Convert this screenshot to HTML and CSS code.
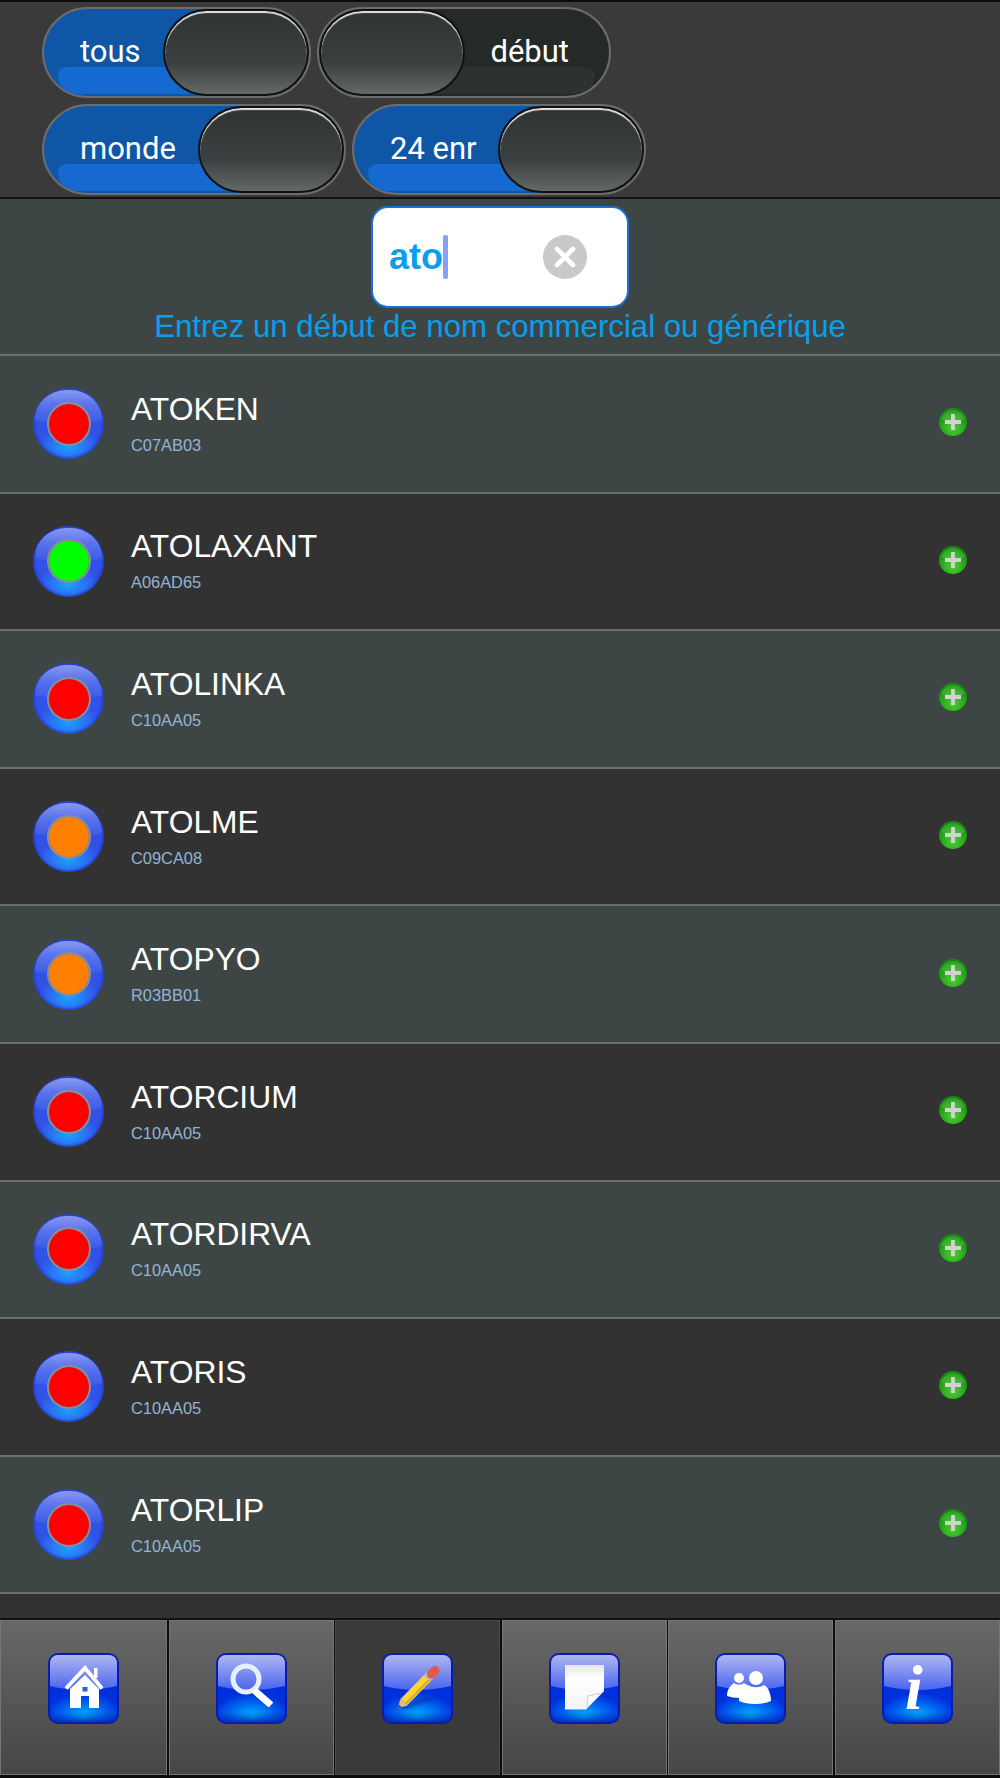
FILE: index.html
```html
<!DOCTYPE html>
<html lang="fr">
<head>
<meta charset="utf-8">
<title>Recherche</title>
<link rel="stylesheet" href="styles.css">
</head>
<body>
<svg class="defs" aria-hidden="true" width="0" height="0">
  <defs>
    <radialGradient id="tileBase" cx="50%" cy="86%" r="58%" gradientTransform="translate(0 .4) scale(1 .6)">
      <stop offset="0" stop-color="#00b8ff"/>
      <stop offset="0.55" stop-color="#0068f2"/>
      <stop offset="1" stop-color="#0030dc"/>
    </radialGradient>
    <linearGradient id="tileEdge" x1="0" y1="0" x2="0" y2="1">
      <stop offset="0.85" stop-color="#0020b0" stop-opacity="0"/>
      <stop offset="1" stop-color="#0020b0" stop-opacity=".75"/>
    </linearGradient>
    <linearGradient id="tileGloss" x1="0" y1="0" x2="0" y2="1">
      <stop offset="0" stop-color="#b0b6f2"/>
      <stop offset="1" stop-color="#4a64ee"/>
    </linearGradient>
    <linearGradient id="paper" x1="0" y1="0" x2="0" y2="1">
      <stop offset="0" stop-color="#e6e6e2"/>
      <stop offset="0.3" stop-color="#ffffff"/>
      <stop offset="1" stop-color="#f4f4f2"/>
    </linearGradient>
    <radialGradient id="plusBall" cx="50%" cy="72%" r="62%">
      <stop offset="0" stop-color="#4fd034"/>
      <stop offset="0.65" stop-color="#27a81b"/>
      <stop offset="1" stop-color="#148c12"/>
    </radialGradient>
    <filter id="soft"><feGaussianBlur stdDeviation="1.6"/></filter>
    <symbol id="tile" viewBox="0 0 71 71">
      <rect width="71" height="71" rx="10" fill="#0a1cac"/>
      <rect x="2" y="2" width="67" height="67" rx="8" fill="url(#tileBase)"/>
      <rect x="2" y="2" width="67" height="67" rx="8" fill="url(#tileEdge)"/>
      <path d="M2 10a8 8 0 0 1 8-8h51a8 8 0 0 1 8 8v23Q35.5 41 2 33z" fill="url(#tileGloss)"/>
    </symbol>
    <symbol id="plus" viewBox="0 0 28 28">
      <circle cx="14" cy="14" r="14" fill="url(#plusBall)"/>
      <path d="M2 11a12.500 12.500 0 0 1 24 0q-12 5-24 0z" fill="#8ce070" opacity=".25"/>
      <path d="M14 6v16M6 14h16" stroke="#d0d4d0" stroke-width="3.800"/>
    </symbol>
  </defs>
</svg>

<header class="filters">
  <div class="filter-row">
    <div class="toggle on w-tous"><span class="toggle-label">tous</span><span class="knob"></span></div>
    <div class="toggle off w-debut"><span class="knob"></span><span class="toggle-label">début</span></div>
  </div>
  <div class="filter-row">
    <div class="toggle on w-monde"><span class="toggle-label">monde</span><span class="knob"></span></div>
    <div class="toggle on w-enr"><span class="toggle-label">24 enr</span><span class="knob"></span></div>
  </div>
</header>

<section class="search">
  <div class="search-box">
    <span class="search-value">ato</span><span class="caret"></span>
    <svg class="clear" viewBox="0 0 44 44"><circle cx="22" cy="22" r="22" fill="#c9c9c9"/><path d="M14 14l16 16M30 14L14 30" stroke="#fff" stroke-width="4.600" stroke-linecap="round"/></svg>
  </div>
  <p class="hint">Entrez un début de nom commercial ou générique</p>
</section>

<main class="results">
  <article class="row"><span class="orb"><span class="dot red"></span></span><div class="meta"><div class="name">ATOKEN</div><div class="code">C07AB03</div></div><svg class="add"><use href="#plus"/></svg></article>
  <article class="row"><span class="orb"><span class="dot green"></span></span><div class="meta"><div class="name">ATOLAXANT</div><div class="code">A06AD65</div></div><svg class="add"><use href="#plus"/></svg></article>
  <article class="row"><span class="orb"><span class="dot red"></span></span><div class="meta"><div class="name">ATOLINKA</div><div class="code">C10AA05</div></div><svg class="add"><use href="#plus"/></svg></article>
  <article class="row"><span class="orb"><span class="dot orange"></span></span><div class="meta"><div class="name">ATOLME</div><div class="code">C09CA08</div></div><svg class="add"><use href="#plus"/></svg></article>
  <article class="row"><span class="orb"><span class="dot orange"></span></span><div class="meta"><div class="name">ATOPYO</div><div class="code">R03BB01</div></div><svg class="add"><use href="#plus"/></svg></article>
  <article class="row"><span class="orb"><span class="dot red"></span></span><div class="meta"><div class="name">ATORCIUM</div><div class="code">C10AA05</div></div><svg class="add"><use href="#plus"/></svg></article>
  <article class="row"><span class="orb"><span class="dot red"></span></span><div class="meta"><div class="name">ATORDIRVA</div><div class="code">C10AA05</div></div><svg class="add"><use href="#plus"/></svg></article>
  <article class="row"><span class="orb"><span class="dot red"></span></span><div class="meta"><div class="name">ATORIS</div><div class="code">C10AA05</div></div><svg class="add"><use href="#plus"/></svg></article>
  <article class="row"><span class="orb"><span class="dot red"></span></span><div class="meta"><div class="name">ATORLIP</div><div class="code">C10AA05</div></div><svg class="add"><use href="#plus"/></svg></article>
</main>

<nav class="tabs">
  <a class="tab">
    <svg class="tab-icon" viewBox="0 0 71 71"><use href="#tile" width="71" height="71"/>
      <path d="M18 35.500 37 15 54 35.500" fill="none" stroke="#fff" stroke-width="4"/>
      <rect x="46" y="15" width="3.500" height="10" fill="#fff"/>
      <path d="M37 22 22 36v19h11V43h8v12h10V36z" fill="#fff"/>
      <rect x="34.500" y="34" width="5" height="4.500" fill="#2a5cf0"/>
    </svg>
  </a>
  <a class="tab">
    <svg class="tab-icon" viewBox="0 0 71 71"><use href="#tile" width="71" height="71"/>
      <circle cx="30" cy="26" r="13" fill="none" stroke="#e6f0fa" stroke-width="5"/>
      <path d="M38 37 55 52" stroke="#fff" stroke-width="7"/>
    </svg>
  </a>
  <a class="tab active">
    <svg class="tab-icon" viewBox="0 0 71 71"><use href="#tile" width="71" height="71"/>
      <path d="M20 55 50 45" stroke="#0f2f90" stroke-width="4" opacity=".55" filter="url(#soft)"/>
      <path d="M16 55l2.500-9.500 7 7z" fill="#dcc08a"/>
      <path d="M16 55l1-3.500 2.500 2.500z" fill="#444"/>
      <path d="M22 49 46 24.500" stroke="#f8d33c" stroke-width="9"/>
      <path d="M24 50.500 47.500 26.500" stroke="#d9a820" stroke-width="2"/>
      <path d="M45 25.500 49.500 21" stroke="#b5b5b5" stroke-width="9"/>
      <path d="M49.500 21 53 17.500" stroke="#e2584e" stroke-width="9" stroke-linecap="round"/>
    </svg>
  </a>
  <a class="tab">
    <svg class="tab-icon" viewBox="0 0 71 71"><use href="#tile" width="71" height="71"/>
      <path d="M16 12h39v26L37 56.500H16z" fill="url(#paper)"/>
      <path d="M55 38 37 56.500 39 43z" fill="#e9e9e6"/>
      <path d="M39 43 52 40.500 38 55z" fill="#fff" stroke="#cfcfcb" stroke-width="1"/>
    </svg>
  </a>
  <a class="tab">
    <svg class="tab-icon" viewBox="0 0 71 71"><use href="#tile" width="71" height="71"/>
      <circle cx="24" cy="25" r="5" fill="#fff"/>
      <path d="M12 43c0-7 4-11 7-13 3 2 7 2 10 0 2 1 3 2 4 3-5 3-7 7-8 12-5 0-10-1-13-2z" fill="#fff"/>
      <circle cx="41" cy="25" r="7" fill="#fff"/>
      <path d="M24 48c0-8 4-14 9-16 5 3 11 3 16 0 4 2 7 8 7 16-8 4-24 4-32 0z" fill="#fff"/>
    </svg>
  </a>
  <a class="tab">
    <svg class="tab-icon" viewBox="0 0 71 71"><use href="#tile" width="71" height="71"/>
      <text class="info-i" x="23" y="56">i</text>
    </svg>
  </a>
</nav>
</body>
</html>
```
FILE: styles.css
```css
* { box-sizing: border-box; }

html, body {
  margin: 0;
  padding: 0;
}

body {
  width: 1000px;
  height: 1778px;
  background: #000;
  display: flex;
  flex-direction: column;
  font-family: "Liberation Sans", Arial, sans-serif;
  overflow: hidden;
}

.defs { display: block; width: 0; height: 0; }

/* Top filter bar */
.filters {
  height: 199px;
  flex: none;
  background: #3a3a3a;
  border-top: 2px solid #0c0c0c;
  border-bottom: 2px solid #111;
  padding: 5px 0 0 42px;
  display: flex;
  flex-direction: column;
  gap: 6px;
}

.filter-row {
  display: flex;
  gap: 6px;
}

.toggle {
  position: relative;
  height: 91px;
  display: flex;
  align-items: center;
  border: 2px solid #6c6c6c;
  border-radius: 46px;
  overflow: hidden;
  flex: none;
}

.toggle::before {
  content: "";
  position: absolute;
  top: 58px;
  bottom: 2px;
}

.toggle.on {
  background: linear-gradient(to right, #0f56a6 calc(100% - 105px), #2a2e2d calc(100% - 105px));
}

.toggle.on::before {
  left: 14px;
  right: 105px;
  background: #1769d2;
  border-radius: 14px 0 0 30px;
}

.toggle.off { background: #252a29; }

.toggle.off::before {
  left: 100px;
  right: 14px;
  background: #2c3231;
  border-radius: 0 14px 30px 0;
}

.w-tous { width: 269px; }
.w-debut { width: 294px; }
.w-monde { width: 304px; }
.w-enr { width: 294px; }

.toggle-label {
  position: relative;
  color: #fff;
  font-family: Roboto, "Liberation Sans", sans-serif;
  font-size: 31px;
  padding-bottom: 2px;
}

.on .toggle-label { padding-left: 36px; }
.off .toggle-label { margin-left: auto; padding-right: 40px; }

.knob {
  position: relative;
  width: 146px;
  height: 87px;
  flex: none;
  border: 2px solid #101212;
  border-radius: 44px;
  background: linear-gradient(to bottom, #2e3433 0, #3a403f 62%, #636967 100%);
  box-shadow: inset 0 2px 1px 0 #e4e6e6;
}

.on .knob { margin-left: auto; }

/* Search */
.search {
  height: 155px;
  flex: none;
  background: #3e4645;
  display: flex;
  flex-direction: column;
  align-items: center;
  padding-top: 7px;
}

.search-box {
  position: relative;
  width: 258px;
  height: 102px;
  flex: none;
  background: #fff;
  border: 2px solid #1c6fd0;
  border-radius: 17px;
  display: flex;
  align-items: center;
  padding-left: 16px;
}

.search-value {
  color: #0a9fec;
  font-size: 36px;
  font-weight: bold;
  line-height: 44px;
}

.caret {
  width: 5px;
  height: 44px;
  background: #8aa0f6;
  border-radius: 2px;
}

.clear {
  position: absolute;
  left: 170px;
  top: 27px;
  width: 44px;
  height: 44px;
}

.hint {
  margin: 0;
  color: #0a9fec;
  font-size: 31.2px;
  line-height: 38px;
  white-space: nowrap;
}

/* Results */
.results {
  flex: 1;
  background: #323232;
  display: flex;
  flex-direction: column;
}

.row {
  height: 137.6px;
  flex: none;
  display: flex;
  align-items: center;
  border-top: 2px solid #6a706e;
  padding-left: 33px;
  padding-right: 33px;
}

.row:nth-child(odd) { background: #3e4645; }
.row:nth-child(even) { background: #323232; }
.row:last-child { border-bottom: 2px solid #6a706e; height: 139.6px; }

.orb {
  position: relative;
  width: 71px;
  height: 71px;
  flex: none;
  border-radius: 50%;
  display: flex;
  align-items: center;
  justify-content: center;
  background: radial-gradient(ellipse 42% 28% at 50% 82%, #1aa4ff 0, #2a72f2 60%, rgba(50, 84, 232, 0) 100%), #3052e6;
  box-shadow: inset 0 0 3px 1px #2234cc;
  overflow: hidden;
}

.orb::before {
  content: "";
  position: absolute;
  left: 2px;
  right: 2px;
  top: 2px;
  height: 32px;
  border-radius: 34px 34px 12px 12px / 31px 31px 3px 3px;
  background: linear-gradient(to bottom, #8a99ef 0, #5a74ec 45%, #3c5ce8 100%);
}

.dot {
  position: relative;
  width: 44px;
  height: 44px;
  border-radius: 50%;
  border: 2.5px solid #8e8e8e;
  background-clip: padding-box;
}

.red { background-color: #ff0000; }
.green { background-color: #00ff00; }
.orange { background-color: #ff8000; }

.meta {
  margin-left: 27px;
  margin-top: -2px;
  display: flex;
  flex-direction: column;
  gap: 8px;
}

.name {
  color: #fff;
  font-size: 31.8px;
  line-height: 36px;
}

.code {
  color: #93b4d6;
  font-size: 16.4px;
  line-height: 20px;
}

.add {
  width: 28px;
  height: 28px;
  margin-left: auto;
  margin-right: 0;
  margin-top: -3px;
}

/* Bottom tabs */
.tabs {
  height: 160px;
  flex: none;
  display: grid;
  grid-template-columns: 167px repeat(5, 165px);
  column-gap: 1.6px;
  background: #0c0c0c;
  border-top: 2px solid #111;
  padding-bottom: 3px;
}

.tab {
  display: flex;
  align-items: flex-start;
  justify-content: center;
  padding-top: 32px;
  border: 1px solid #767676;
  background: linear-gradient(to bottom, #686868, #464646);
}

.tab.active {
  background: #3a3a3a;
  border-color: #4a4a4a;
}

.tab-icon {
  width: 71px;
  height: 71px;
}

.info-i {
  font-family: "Liberation Serif", serif;
  font-style: italic;
  font-weight: bold;
  font-size: 64px;
  fill: #fff;
}
```
